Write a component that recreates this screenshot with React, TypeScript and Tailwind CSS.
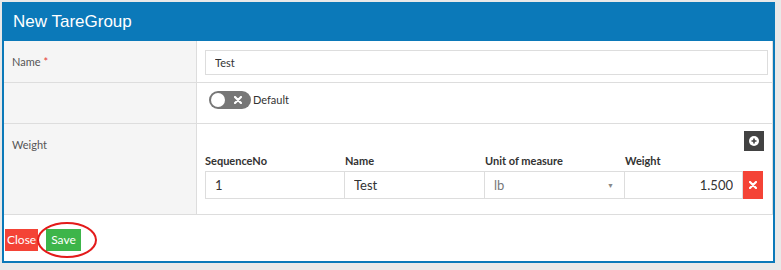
import React, { useState } from "react";

const font = { fontFamily: "Lato, 'Open Sans', sans-serif" };

export default function App() {
  const [isDefault, setIsDefault] = useState(false);

  return (
    <div className="w-[781px] h-[270px] bg-[#e9e9e9] pt-[2px] pl-[2px]" style={font}>
      <div className="w-[773px] h-[261px] flex flex-col border-x-2 border-b-2 border-[#0b79b9] bg-white">
        <div className="h-[39px] -mx-[2px] bg-[#0b79b9] flex items-center pl-[11px]">
          <h1 className="text-white text-[17px] leading-none" style={{ fontFamily: "'Liberation Sans', Arial, sans-serif" }}>
            New TareGroup
          </h1>
        </div>

        <div className="flex flex-col border-r border-[#dddddd]">
          {/* Name */}
          <div className="flex h-[42px] border-b border-[#dddddd]">
            <div className="w-[193px] shrink-0 bg-[#f5f5f5] border-r border-[#dddddd] pl-[8px] pt-[13px] text-[11px] text-[#555]">
              Name <span className="text-[#e53935]">*</span>
            </div>
            <div className="flex-1 pl-[8px] pr-[4px] pt-[8px]">
              <input
                defaultValue="Test"
                className="w-full h-[25px] border border-[#dddddd] px-[9px] text-[11px] text-[#333] outline-none"
              />
            </div>
          </div>

          {/* Default toggle */}
          <div className="flex h-[41px] border-b border-[#dddddd]">
            <div className="w-[193px] shrink-0 bg-[#f5f5f5] border-r border-[#dddddd]" />
            <div className="flex-1 pl-[12px] pt-[8px] flex items-start">
              <button
                onClick={() => setIsDefault(!isDefault)}
                className="relative w-[42px] h-[18px] rounded-full bg-[#777] flex items-center"
              >
                <span className="absolute left-[2px] top-[2px] w-[14px] h-[14px] rounded-full bg-white" />
                <svg className="absolute right-[9px] top-[5px]" width="8" height="8" viewBox="0 0 8 8">
                  <path d="M1 1L7 7M7 1L1 7" stroke="white" strokeWidth="2.2" strokeLinecap="round" />
                </svg>
              </button>
              <span className="ml-[2px] text-[11px] text-[#333] leading-[18px]">Default</span>
            </div>
          </div>

          {/* Weight */}
          <div className="flex h-[91px] border-b border-[#dddddd]">
            <div className="w-[193px] shrink-0 bg-[#f5f5f5] border-r border-[#dddddd] pl-[8px] pt-[13px] text-[11px] text-[#555]">
              Weight
            </div>
            <div className="flex-1 pl-[8px] pr-[8px] pt-[7px]">
              <div className="flex justify-end">
                <button className="w-[20px] h-[20px] bg-[#424242] flex items-center justify-center">
                  <svg width="10" height="10" viewBox="0 0 10 10">
                    <circle cx="5" cy="5" r="5" fill="white" />
                    <path d="M5 2.5V7.5M2.5 5H7.5" stroke="#424242" strokeWidth="1.6" />
                  </svg>
                </button>
              </div>
              <div className="flex text-[11px] font-bold text-[#333] h-[20px] items-center">
                <div className="w-[140px]">SequenceNo</div>
                <div className="w-[140px]">Name</div>
                <div className="w-[140px]">Unit of measure</div>
                <div className="w-[118px]">Weight</div>
              </div>
              <div className="flex h-[28px]">
                <input
                  defaultValue="1"
                  className="w-[140px] h-full border border-[#dddddd] px-[9px] text-[13px] text-[#333] outline-none"
                />
                <input
                  defaultValue="Test"
                  className="w-[140px] h-full border border-l-0 border-[#dddddd] px-[9px] text-[13px] text-[#333] outline-none"
                />
                <div className="w-[140px] h-full border border-l-0 border-[#dddddd] px-[9px] flex items-center justify-between text-[13px] text-[#777]">
                  <span className="pt-[2px]">lb</span>
                  <span className="text-[7px] text-[#888] pr-[1px]">▼</span>
                </div>
                <input
                  defaultValue="1.500"
                  className="w-[118px] h-full border border-l-0 border-[#dddddd] px-[9px] text-[13px] text-[#333] text-right outline-none"
                />
                <button className="w-[20px] h-full bg-[#f44336] flex items-center justify-center">
                  <svg width="8" height="8" viewBox="0 0 8 8">
                    <path d="M1 1L7 7M7 1L1 7" stroke="white" strokeWidth="2.2" strokeLinecap="round" />
                  </svg>
                </button>
              </div>
            </div>
          </div>
        </div>

        {/* Footer */}
        <div className="flex items-center pt-[14px] pl-[1px] relative">
          <button className="h-[22px] px-[2px] bg-[#f44336] text-white text-[12px] leading-none whitespace-nowrap">
            Close
          </button>
          <button className="ml-[8px] h-[22px] px-[5px] bg-[#3db54a] text-white text-[12px] leading-none">Save</button>
          <div className="absolute left-[33px] top-[7px] w-[60px] h-[36px] rounded-[50%] border-2 border-[#e31b1b]" />
        </div>
      </div>
    </div>
  );
}
